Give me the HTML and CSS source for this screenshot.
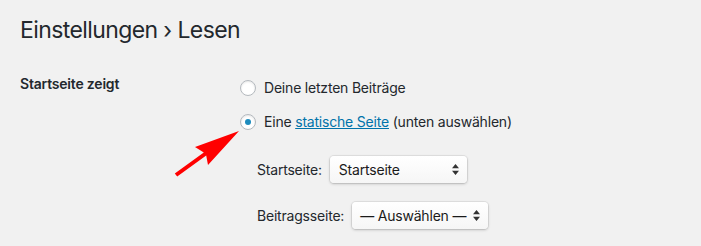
FILE: index.html
```html
<!DOCTYPE html>
<html lang="de">
<head>
    <meta charset="UTF-8">
    <meta name="viewport" content="width=device-width, initial-scale=1.0">
    <title>Einstellungen › Lesen</title>
    <link rel="stylesheet" href="styles.css">
</head>
<body>
    <div class="wrap">
        <h1>Einstellungen › Lesen</h1>

        <div class="form-row">
            <div class="row-label">Startseite zeigt</div>
            <div class="row-field">
                <label class="choice">
                    <span class="radio"></span>
                    Deine letzten Beiträge
                </label>
                <label class="choice">
                    <span class="radio radio-checked"></span>
                    <span>Eine <a href="#">statische Seite</a> (unten auswählen)</span>
                </label>

                <!-- Auswahl der Seiten -->
                <div class="page-selects">
                    <div class="select-row">
                        <span>Startseite:</span>
                        <span class="select select-front">
                            Startseite
                            <svg class="select-arrows" width="7" height="11" viewBox="0 0 7 11"><path d="M3.5 0L7 4.2H0z M3.5 11L0 6.8h7z" fill="#333"/></svg>
                        </span>
                    </div>
                    <div class="select-row">
                        <span>Beitragsseite:</span>
                        <span class="select select-posts">
                            — Auswählen —
                            <svg class="select-arrows" width="7" height="11" viewBox="0 0 7 11"><path d="M3.5 0L7 4.2H0z M3.5 11L0 6.8h7z" fill="#333"/></svg>
                        </span>
                    </div>
                </div>
            </div>
        </div>

        <!-- roter Pfeil auf die Option -->
        <svg class="pointer" width="701" height="246" viewBox="0 0 701 246">
            <polygon points="239,131 195,147 203.8,152.4 174.8,173.4 177.2,176.6 206.2,155.6 208,165" fill="#ff0000"/>
        </svg>
    </div>
</body>
</html>
```

FILE: styles.css
```css
body {
    margin: 0;
    background-color: #f1f1f1;
    font-family: Inter, "Noto Sans", sans-serif;
    font-size: 14px;
    letter-spacing: -0.2px;
    color: #23282d;
}

.wrap {
    position: relative;
    padding: 16px 20px 0 20px;
    height: 230px;
}

h1 {
    margin: 0;
    font-size: 23px;
    font-weight: 400;
    line-height: 29px;
    letter-spacing: -0.6px;
}

.form-row {
    display: flex;
    margin-top: 29px;
}

.row-label {
    width: 220px;
    font-weight: 600;
    line-height: 20px;
}

.row-field {
    display: flex;
    flex-direction: column;
    padding-top: 4px;
}

.choice {
    display: flex;
    align-items: center;
    line-height: 20px;
    margin-bottom: 14px;
}

.radio {
    width: 14px;
    height: 14px;
    border: 1px solid #b4b9be;
    border-radius: 50%;
    background-color: #ffffff;
    box-shadow: inset 0 1px 2px rgba(0, 0, 0, 0.1);
    margin-right: 8px;
    display: flex;
    align-items: center;
    justify-content: center;
}

.radio-checked::after {
    content: "";
    width: 6px;
    height: 6px;
    border-radius: 50%;
    background-color: #1e8cbe;
}

a {
    color: #0073aa;
}

.page-selects {
    margin: 10px 0 0 17px;
}

.select-row {
    display: flex;
    align-items: center;
    height: 27px;
    margin-bottom: 19px;
}

.select {
    display: flex;
    align-items: center;
    justify-content: space-between;
    box-sizing: border-box;
    height: 27px;
    margin-left: 8px;
    padding: 0 8px 0 9px;
    border-radius: 4px;
    background: linear-gradient(#ffffff, #f6f6f6);
    box-shadow: 0 0 0 1px rgba(0, 0, 0, 0.06), 0 1px 3px rgba(0, 0, 0, 0.22);
    color: #1a1a1a;
}

.select-front {
    width: 137px;
}

.select-posts {
    width: 136px;
    padding-left: 8px;
}

.pointer {
    position: absolute;
    left: 0;
    top: 0;
}
```
